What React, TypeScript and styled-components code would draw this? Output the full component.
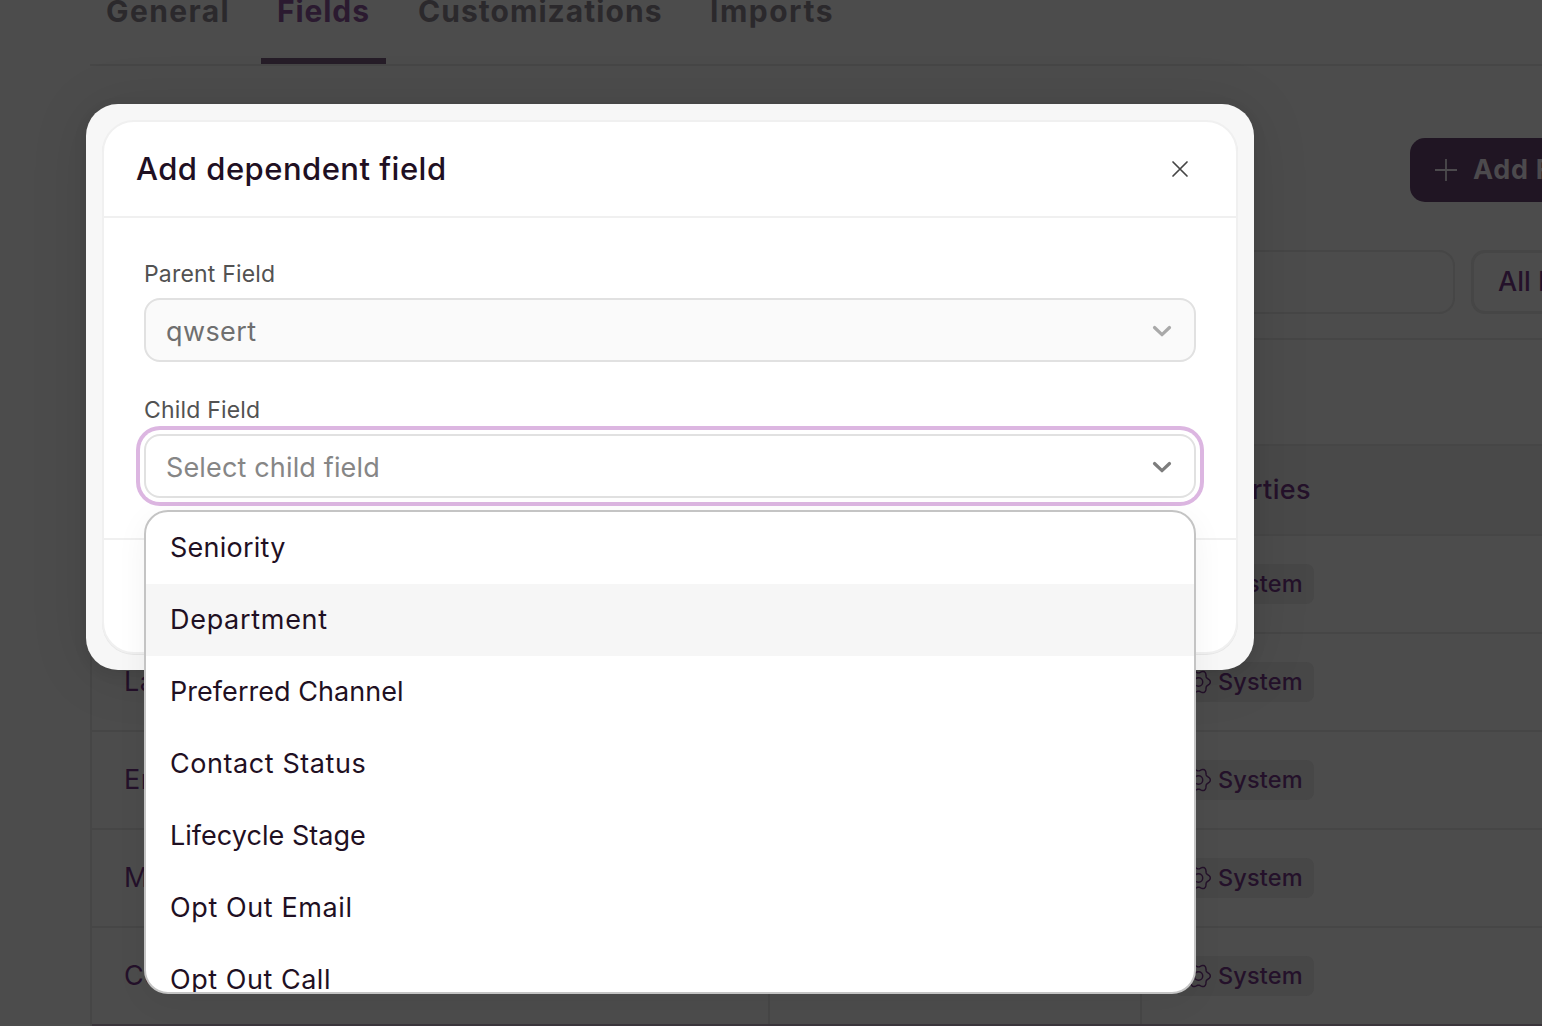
import React from "react";
import styled, { createGlobalStyle } from "styled-components";

const sans = `"Inter", "Open Sans", sans-serif`;
const ink = "#1f1023";
const dimInk = "#24112a";
const dimLine = "#464646";

const GlobalStyle = createGlobalStyle`
  * { box-sizing: border-box; }
  body { margin: 0; background: #4c4c4c; font-family: ${sans}; }
`;

const Page = styled.div`
  position: relative;
  width: 1542px;
  height: 1026px;
  overflow: hidden;
  background: #4c4c4c;
  color: ${dimInk};
  font-size: 27px;
`;

const Label = styled.span<{ $spacing?: number }>`
  letter-spacing: ${(p) => p.$spacing ?? 0.5}px;
  white-space: nowrap;
`;

const Tabs = styled.nav`
  display: flex;
  gap: 16px;
  height: 66px;
  margin-left: 90px;
  border-bottom: 2px solid ${dimLine};
`;

const Tab = styled.div<{ $width: number; $active?: boolean }>`
  flex: none;
  width: ${(p) => p.$width}px;
  height: 64px;
  padding-left: 16px;
  border-bottom: 6px solid ${(p) => (p.$active ? "#261d28" : "transparent")};
  color: ${(p) => (p.$active ? "#2b1a30" : "#2b292c")};
  font-size: 30px;
  font-weight: 650;
  line-height: 22px;
`;

const Actions = styled.div`
  display: flex;
  margin: 72px 0 0 1410px;
`;

const AddButton = styled.div`
  display: flex;
  flex: none;
  align-items: center;
  gap: 16px;
  width: 200px;
  height: 64px;
  padding: 0 0 1px 24px;
  border-radius: 15px;
  background: #201523;
  color: #4c4a4d;
  font-weight: 700;
`;

const Filters = styled.div`
  display: flex;
  gap: 16px;
  margin: 48px 0 24px 90px;
`;

const SearchBox = styled.div`
  flex: none;
  width: 1365px;
  height: 64px;
  border: 2px solid ${dimLine};
  border-radius: 16px;
`;

const FilterButton = styled.div`
  display: flex;
  flex: none;
  align-items: center;
  width: 200px;
  height: 64px;
  padding: 0 0 2px 24px;
  border: 3px solid ${dimLine};
  border-radius: 14px;
  font-weight: 500;
`;

const Table = styled.div`
  width: 1500px;
  margin-left: 90px;
  border: 2px solid ${dimLine};
`;

const TableTools = styled.div`
  height: 104px;
`;

const Row = styled.div<{ $head?: boolean; $last?: boolean }>`
  display: grid;
  grid-template-columns: 678px 372px 1fr;
  height: ${(p) => (p.$head ? 92 : 98)}px;
  border-top: ${(p) => (p.$head ? `2px solid ${dimLine}` : "0")};
  border-bottom: 2px solid ${(p) => (p.$last ? "#3a353b" : dimLine)};
  background: ${(p) => (p.$head ? "#494949" : "transparent")};
  font-weight: ${(p) => (p.$head ? 500 : 400)};
`;

const Cell = styled.div<{ $divided?: boolean }>`
  display: flex;
  align-items: center;
  padding-left: 32px;
  border-right: ${(p) => (p.$divided ? `2px solid ${dimLine}` : "0")};

  > ${Label} {
    padding-bottom: 2px;
  }
`;

const Badge = styled.span`
  display: flex;
  align-items: center;
  gap: 7px;
  width: 140px;
  height: 40px;
  padding-left: 12px;
  border-radius: 8px;
  background: #474747;
  font-size: 23.5px;
  font-weight: 500;

  > ${Label} {
    padding-bottom: 2px;
  }
`;

const Modal = styled.section`
  position: absolute;
  left: 86px;
  top: 104px;
  width: 1168px;
  height: 566px;
  padding: 16px;
  border-radius: 32px;
  background: #f7f7f7;
  box-shadow: 0 4px 60px rgba(0, 0, 0, 0.1), 0 4px 14px rgba(0, 0, 0, 0.08);
`;

const Panel = styled.div`
  display: flex;
  flex-direction: column;
  height: 100%;
  border: 2px solid #f0f0f0;
  border-radius: 32px;
  background: #fff;
  box-shadow: 0 1px 0 #e6e6e6;
`;

const PanelHeader = styled.header`
  display: flex;
  align-items: center;
  justify-content: space-between;
  height: 96px;
  padding: 0 47px 0 32px;
  border-bottom: 2px solid #f0f0f0;
  color: ${ink};
  font-size: 31px;
  font-weight: 500;

  > ${Label} {
    padding-bottom: 2px;
  }
`;

const PanelBody = styled.div`
  display: flex;
  flex-direction: column;
  gap: 32px;
  height: 322px;
  padding: 40px 40px 0;
  border-bottom: 2px solid #f0f0f0;
`;

const Field = styled.div`
  position: relative;
  display: flex;
  flex-direction: column;
  gap: 8px;
`;

const FieldLabel = styled.label`
  height: 32px;
  color: #525252;
  font-size: 23px;
  line-height: 32px;
`;

const SelectBox = styled.div<{ $focused?: boolean }>`
  display: flex;
  align-items: center;
  justify-content: space-between;
  height: 64px;
  padding: 2px 22px 0 20px;
  border: 2px solid #e1e1e1;
  border-radius: 16px;
  background: ${(p) => (p.$focused ? "#fff" : "#fafafa")};
  box-shadow: ${(p) => (p.$focused ? "0 0 0 4px #fff, 0 0 0 8px #dcb6e1" : "none")};
  color: ${(p) => (p.$focused ? "#868686" : "#6f6f6f")};
`;

const Menu = styled.div`
  position: absolute;
  top: 116px;
  left: 0;
  right: 0;
  height: 484px;
  overflow: hidden;
  border: 2px solid #c4c4c4;
  border-radius: 24px;
  background: #fff;
  color: ${ink};
  box-shadow: 0 8px 32px rgba(0, 0, 0, 0.05);
`;

const Option = styled.div<{ $hovered?: boolean }>`
  display: flex;
  align-items: center;
  height: 72px;
  padding: 0 0 2px 24px;
  background: ${(p) => (p.$hovered ? "#f6f6f6" : "transparent")};
`;

const gearPath =
  Array.from({ length: 73 }, (_, i) => {
    const a = (i * 5 * Math.PI) / 180;
    const r = 10.9 + 1.4 * Math.cos(6 * a);
    return `${i ? "L" : "M"}${(13 + r * Math.cos(a)).toFixed(2)} ${(13 + r * Math.sin(a)).toFixed(2)}`;
  }).join("") + "Z";

const GearIcon = () => (
  <svg width="25" height="26" viewBox="0 0 26 26" fill="none" stroke="#24112a" strokeWidth="1.5" strokeLinejoin="round">
    <path d={gearPath} />
    <circle cx="13" cy="13" r="4.4" />
  </svg>
);

const PlusIcon = () => (
  <svg width="23" height="22" viewBox="0 0 23 22" stroke="#4c4a4d" strokeWidth="1.8">
    <path d="M12 0V22M1 11H23" />
  </svg>
);

const CloseIcon = () => (
  <svg width="18" height="18" viewBox="0 0 18 18" stroke="#454545" strokeWidth="1.7" strokeLinecap="round">
    <path d="M2 2L16 16M16 2L2 16" />
  </svg>
);

const ChevronIcon = ({ color }: { color: string }) => (
  <svg width="20" height="14" viewBox="0 0 20 14" fill="none" stroke={color} strokeWidth="3.2" strokeLinecap="round" strokeLinejoin="round">
    <path d="M2.5 3.5L10 10.7L17.5 3.5" />
  </svg>
);

const tabs = [
  { text: "General", width: 155, spacing: 1.4 },
  { text: "Fields", width: 125, spacing: 0.9, active: true },
  { text: "Customizations", width: 276, spacing: 1.05 },
  { text: "Imports", width: 155, spacing: 1.5 },
];

const rows = ["First Name", "Last Name", "Email", "Mobile", "Company"];

const options = [
  { text: "Seniority", spacing: 0.25 },
  { text: "Department", spacing: 0.7 },
  { text: "Preferred Channel", spacing: 0.05 },
  { text: "Contact Status", spacing: 0.57 },
  { text: "Lifecycle Stage", spacing: 0.03 },
  { text: "Opt Out Email", spacing: 0.6 },
  { text: "Opt Out Call", spacing: 0.53 },
];

export default function App() {
  return (
    <Page>
      <GlobalStyle />
      <Tabs>
        {tabs.map((t) => (
          <Tab key={t.text} $width={t.width} $active={t.active}>
            <Label $spacing={t.spacing}>{t.text}</Label>
          </Tab>
        ))}
      </Tabs>
      <Actions>
        <AddButton>
          <PlusIcon />
          <Label $spacing={0.7}>Add Field</Label>
        </AddButton>
      </Actions>
      <Filters>
        <SearchBox />
        <FilterButton>
          <Label $spacing={0}>All Fields</Label>
        </FilterButton>
      </Filters>
      <Table>
        <TableTools />
        <Row $head>
          <Cell>
            <Label>Name</Label>
          </Cell>
          <Cell>
            <Label>Type</Label>
          </Cell>
          <Cell>
            <Label $spacing={0.35}>Properties</Label>
          </Cell>
        </Row>
        {rows.map((name, i) => (
          <Row key={name} $last={i === rows.length - 1}>
            <Cell $divided>
              <Label $spacing={0.5}>{name}</Label>
            </Cell>
            <Cell $divided />
            <Cell>
              <Badge>
                <GearIcon />
                <Label $spacing={0.15}>System</Label>
              </Badge>
            </Cell>
          </Row>
        ))}
      </Table>

      <Modal>
        <Panel>
          <PanelHeader>
            <Label $spacing={0.48}>Add dependent field</Label>
            <CloseIcon />
          </PanelHeader>
          <PanelBody>
            <Field>
              <FieldLabel>
                <Label $spacing={0.18}>Parent Field</Label>
              </FieldLabel>
              <SelectBox>
                <Label $spacing={0.4}>qwsert</Label>
                <ChevronIcon color="#a9a9a9" />
              </SelectBox>
            </Field>
            <Field>
              <FieldLabel>
                <Label $spacing={0.18}>Child Field</Label>
              </FieldLabel>
              <SelectBox $focused>
                <Label $spacing={0.15}>Select child field</Label>
                <ChevronIcon color="#7d7d7d" />
              </SelectBox>
              <Menu>
                {options.map((o) => (
                  <Option key={o.text} $hovered={o.text === "Department"}>
                    <Label $spacing={o.spacing}>{o.text}</Label>
                  </Option>
                ))}
              </Menu>
            </Field>
          </PanelBody>
        </Panel>
      </Modal>
    </Page>
  );
}
